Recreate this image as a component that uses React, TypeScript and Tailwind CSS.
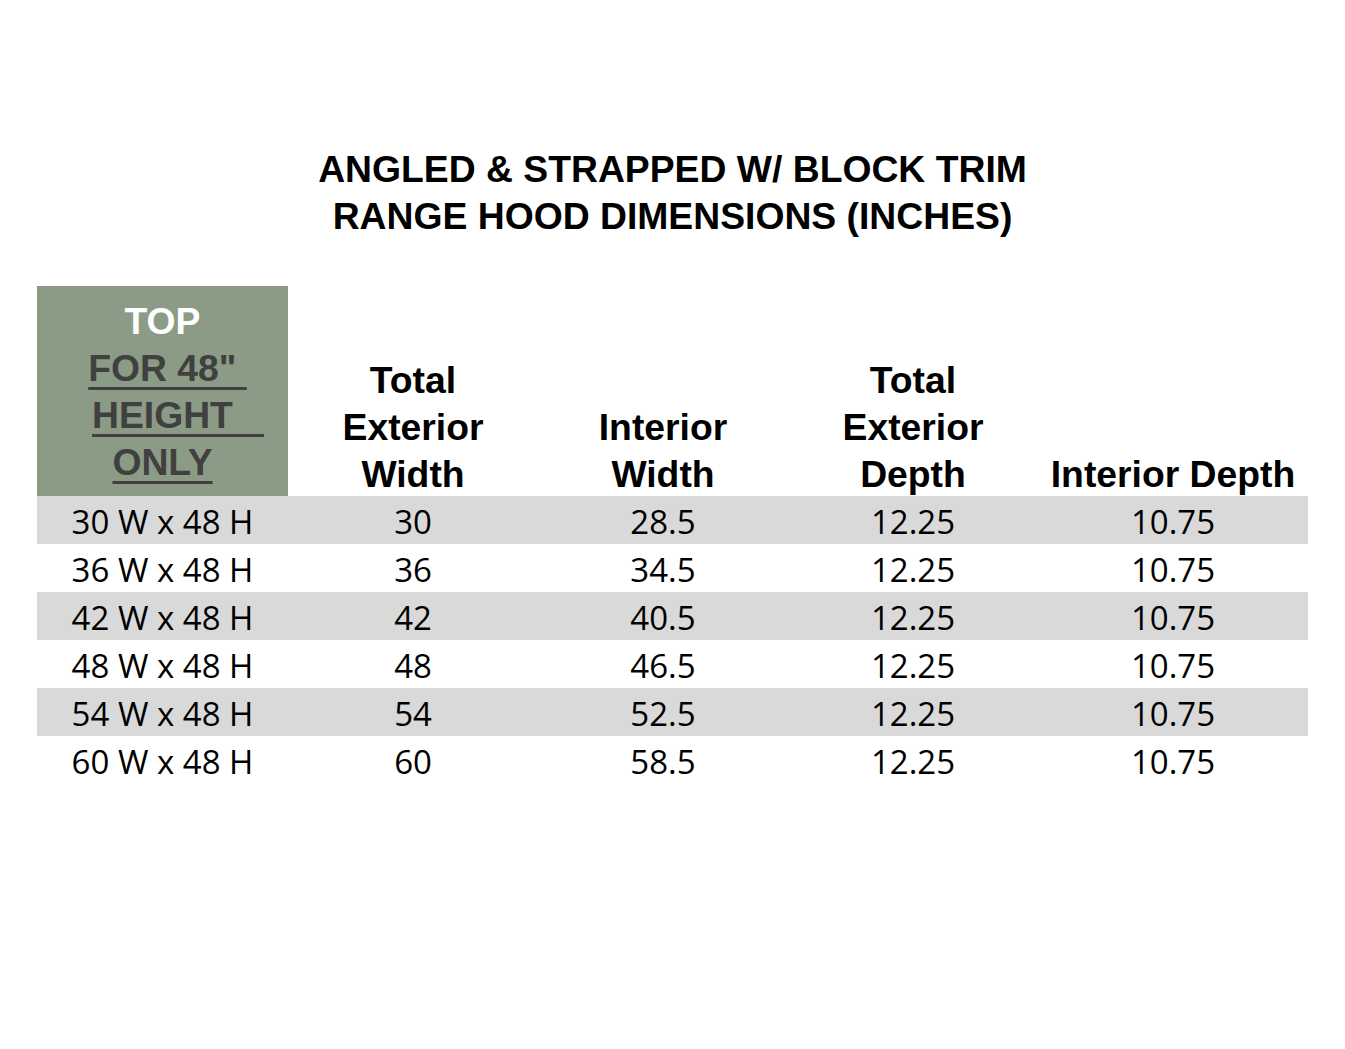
const rows = [
  ['30 W x 48 H', '30', '28.5', '12.25', '10.75'],
  ['36 W x 48 H', '36', '34.5', '12.25', '10.75'],
  ['42 W x 48 H', '42', '40.5', '12.25', '10.75'],
  ['48 W x 48 H', '48', '46.5', '12.25', '10.75'],
  ['54 W x 48 H', '54', '52.5', '12.25', '10.75'],
  ['60 W x 48 H', '60', '58.5', '12.25', '10.75'],
];

const headers = [
  ['Total', 'Exterior', 'Width'],
  ['Interior', 'Width'],
  ['Total', 'Exterior', 'Depth'],
  ['Interior Depth'],
];

export default function App() {
  return (
    <div className="min-h-[1049px] w-[1345px] bg-white text-black">
      {/* title */}
      <div
        className="pt-[146px] text-center text-[37.3px] font-bold leading-[47px]"
        style={{ fontFamily: '"Liberation Sans", Arial, sans-serif' }}
      >
        <div>ANGLED &amp; STRAPPED W/ BLOCK TRIM</div>
        <div>RANGE HOOD DIMENSIONS (INCHES)</div>
      </div>

      {/* table */}
      <div className="ml-[37px] mt-[46px] grid w-[1271px] grid-cols-[251px_250px_250px_250px_270px]">
        <div
          className="flex h-[210px] flex-col items-center justify-center whitespace-nowrap bg-[#8b9b86] pt-[2px] text-center text-[37.3px] font-bold leading-[47px] text-[#404040]"
          style={{ fontFamily: '"Liberation Sans", Arial, sans-serif' }}
        >
          <div className="text-white">TOP</div>
          <div>
            <span className="-mr-[10px] underline decoration-[#404040] decoration-[3px] underline-offset-[6px]">
              FOR 48"&nbsp;
            </span>
          </div>
          <div>
            <span className="-mr-[31px] underline decoration-[#404040] decoration-[3px] underline-offset-[6px]">
              HEIGHT&nbsp;&nbsp;&nbsp;
            </span>
          </div>
          <div>
            <span className="underline decoration-[#404040] decoration-[3px] underline-offset-[6px]">ONLY</span>
          </div>
        </div>
        {headers.map((lines, i) => (
          <div
            key={i}
            className="flex h-[210px] flex-col items-center justify-end text-center text-[37.3px] font-bold leading-[47px]"
            style={{ fontFamily: '"Liberation Sans", Arial, sans-serif' }}
          >
            <div className="relative top-[2px]">
              {lines.map((l) => (
                <div key={l} className="whitespace-nowrap">
                  {l}
                </div>
              ))}
            </div>
          </div>
        ))}

        {rows.map((row, r) =>
          row.map((cell, c) => (
            <div
              key={`${r}-${c}`}
              className={`flex h-[48px] items-center justify-center pt-[3px] text-[33px] leading-none ${
                r % 2 === 0 ? 'bg-[#d9d9d9]' : 'bg-white'
              }`}
              style={{ fontFamily: '"Open Sans", sans-serif' }}
            >
              {cell}
            </div>
          ))
        )}
      </div>
    </div>
  );
}
